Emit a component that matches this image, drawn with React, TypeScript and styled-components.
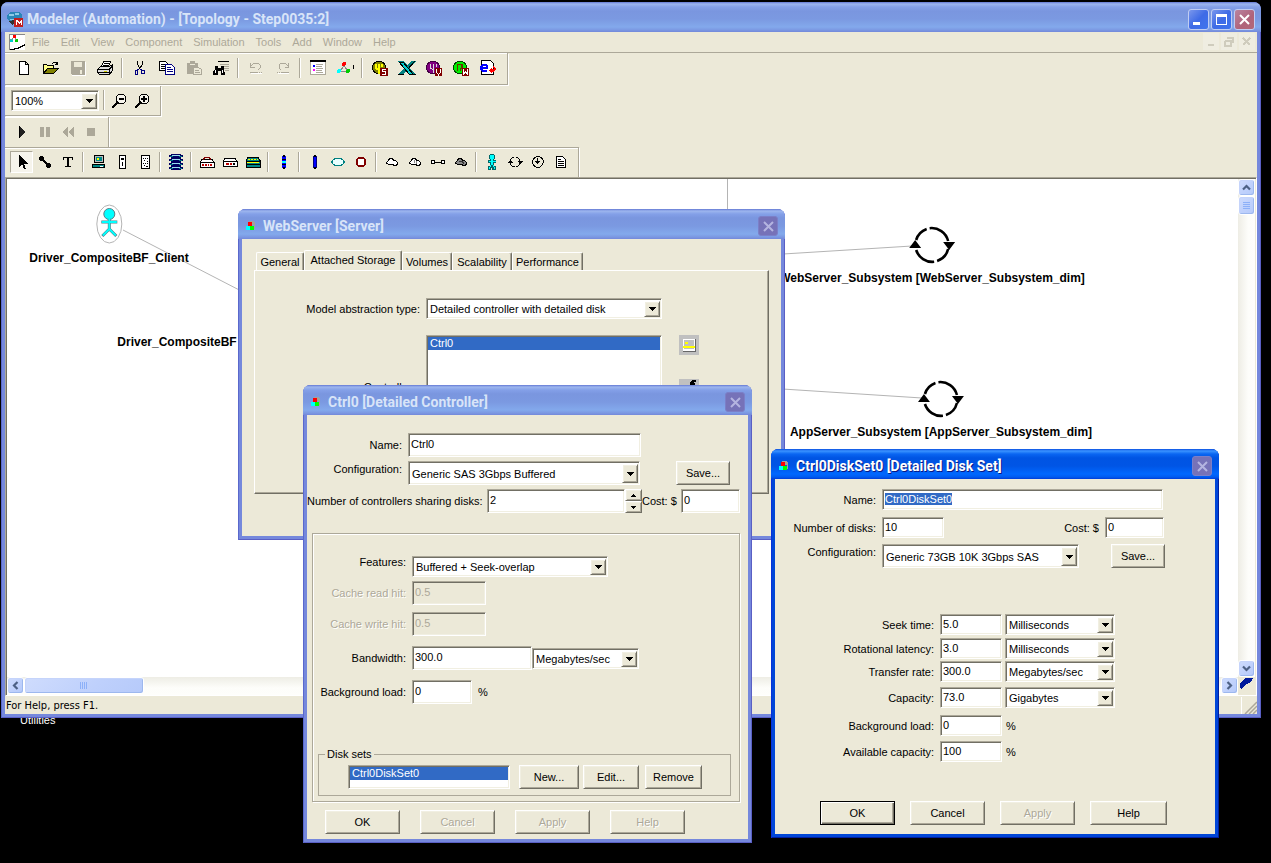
import React, { useEffect, useRef } from "react";
import styled, { createGlobalStyle, css } from "styled-components";

const face = "#ece9d8";
const shade = "#aca899";
const dark = "#716f64";
const lite = "#f1efe2";
const pick = "#316ac5";

const Global = createGlobalStyle`
  * { box-sizing: border-box; }
  html, body { margin: 0; background: #000; }
  body, button, input, select {
    font-family: "Liberation Sans", Arial, sans-serif;
    font-size: 11px;
    line-height: 14px;
    color: #000;
  }
  button, input, select { border-radius: 0; margin: 0; padding: 0; outline: none; }
  svg { display: block; flex: none; }
`;

const sunken = css`
  border: 1px solid;
  border-color: ${shade} #fff #fff ${shade};
  box-shadow: inset 1px 1px 0 ${dark}, inset -1px -1px 0 ${lite};
`;
const raised = css`
  border: 1px solid;
  border-color: #fff ${dark} ${dark} #fff;
  box-shadow: inset 1px 1px 0 ${lite}, inset -1px -1px 0 ${shade};
`;

/* ---------- windows ---------- */

const Desktop = styled.div`
  position: relative;
  min-height: 100vh;
  min-width: 1220px;
  overflow: hidden;
  background: #000;
`;
const DesktopLabel = styled.span`
  position: absolute;
  left: 20px;
  top: 713px;
  color: #fff;
`;
const Frame = styled.section<{ $active?: boolean }>`
  position: absolute;
  display: flex;
  flex-direction: column;
  padding: 0 4px 4px;
  border-radius: 8px 8px 0 0;
  background: ${(p) => (p.$active ? "#0046d8" : "#7588dc")};
  box-shadow: inset 1px 0 0 ${(p) => (p.$active ? "#0831d9" : "#5a68cc")},
    inset -1px 0 0 ${(p) => (p.$active ? "#001ea0" : "#5a5fc4")},
    inset 0 -1px 0 ${(p) => (p.$active ? "#001ea0" : "#5a5fc4")};
`;
const MainFrame = styled(Frame)`
  left: 1px;
  right: 10px;
  top: 2px;
  height: 716px;
`;
const DialogFrame = styled(Frame)<{ $x: number; $y: number; $w: number; $h: number }>`
  left: ${(p) => p.$x}px;
  top: ${(p) => p.$y}px;
  width: ${(p) => p.$w}px;
  min-height: ${(p) => p.$h}px;
`;
const TitleBar = styled.header<{ $active?: boolean; $wide?: boolean }>`
  display: flex;
  align-items: center;
  flex: none;
  height: 30px;
  margin: 0 -4px;
  padding: 4px ${(p) => (p.$wide ? "6px 0 6px" : "7px 0 7px")};
  gap: ${(p) => (p.$wide ? 4 : 6)}px;
  border-radius: 7px 7px 0 0;
  background: ${(p) =>
    p.$active
      ? "linear-gradient(#0a4fe0 0, #3a93ff 2px, #0a66f2 5px, #0054e3 9px, #0055e5 17px, #0068ff 25px, #005bf0 28px, #003dd7 30px)"
      : "linear-gradient(#6378d4 0, #9db6ee 2px, #84a0e8 5px, #7a96df 9px, #7b99e1 17px, #83a9ec 25px, #7b98e2 28px, #7388da 30px)"};
`;
const Title = styled.h1<{ $active?: boolean }>`
  flex: 1;
  margin: 0;
  font: 700 14px/18px Roboto, "Noto Sans", sans-serif;
  white-space: nowrap;
  color: ${(p) => (p.$active ? "#fff" : "#d8e4f8")};
  text-shadow: ${(p) => (p.$active ? "1px 1px 0 #0a1883" : "none")};
`;
const IconSlot = styled.span`
  display: flex;
  justify-content: center;
  width: 12px;
`;
const CaptionButton = styled.button<{ $tone: "blue" | "red" | "dim" }>`
  display: flex;
  align-items: center;
  justify-content: center;
  width: ${(p) => (p.$tone === "dim" ? 20 : 21)}px;
  height: ${(p) => (p.$tone === "dim" ? 20 : 21)}px;
  margin-left: ${(p) => (p.$tone === "dim" ? 0 : -2)}px;
  border: 1px solid ${(p) => (p.$tone === "dim" ? "#7b7fc8" : "#c0cdf3")};
  border-radius: 3px;
  background: ${(p) =>
    p.$tone === "blue"
      ? "linear-gradient(135deg, #7a97ec, #3f6be6 50%, #3f74ee)"
      : p.$tone === "red"
        ? "linear-gradient(135deg, #b9849f, #b0637a 60%, #b26878)"
        : "#7672b8"};
`;
const Body = styled.div`
  flex: 1;
  display: flex;
  flex-direction: column;
  min-height: 0;
  background: ${face};
`;

/* ---------- main window bars ---------- */

const MenuBar = styled.nav`
  display: flex;
  align-items: center;
  height: 20px;
  padding: 0 2px 1px 4px;
`;
const MenuItem = styled.button`
  margin-left: 4px;
  padding: 0 3px;
  border: 0;
  background: none;
  color: ${shade};
  & + & { margin-left: 5px; }
`;
const Spacer = styled.span`
  flex: 1;
`;
const ChildButton = styled.button`
  display: flex;
  align-items: center;
  justify-content: center;
  width: 16px;
  height: 17px;
  margin-left: 2px;
  border: 0;
  background: #efede1;
`;
const Bar = styled.div<{ $h: number; $open?: boolean; $ruled?: boolean }>`
  display: flex;
  align-items: center;
  align-self: flex-start;
  height: ${(p) => p.$h}px;
  padding: 0 6px 1px 5px;
  margin-bottom: ${(p) => (p.$open ? 0 : 1)}px;
  border-right: 1px solid ${shade};
  border-bottom: ${(p) => (p.$open ? "0" : "1px solid " + shade)};
  border-top: ${(p) => (p.$ruled ? "1px solid " + shade : "0")};
  box-shadow: 1px 1px 0 #fff, inset 0 1px 0 #fff;
`;
const Bars = styled.div`
  display: flex;
  flex-direction: column;
  border-top: 1px solid ${shade};
`;
const Rule = styled.hr`
  width: 0;
  height: 20px;
  margin: 0 3px;
  border: 0;
  border-left: 1px solid ${shade};
  border-right: 1px solid #fff;
  padding: 0;
`;
const Tool = styled.button<{ $w: number; $on?: boolean }>`
  display: flex;
  align-items: center;
  justify-content: center;
  width: ${(p) => p.$w}px;
  height: 22px;
  border: 0;
  background: none;
  ${(p) =>
    p.$on &&
    css`
      border: 1px solid;
      border-color: ${shade} #fff #fff ${shade};
      background: #f6f4ec;
    `}
`;

/* ---------- canvas ---------- */

const View = styled.div`
  flex: 1;
  display: grid;
  grid-template: 1fr 18px / 1fr 17px;
  min-height: 0;
  border: 1px solid;
  border-color: ${shade} #fff #fff ${shade};
  box-shadow: inset 1px 1px 0 ${dark};
  padding: 1px 1px 0 1px;
`;
const Canvas = styled.div`
  position: relative;
  overflow: hidden;
  background: #fff;
`;
const Links = styled.svg`
  position: absolute;
  left: 0;
  top: 0;
`;
const Node = styled.div<{ $x: number; $y: number }>`
  position: absolute;
  left: ${(p) => p.$x}px;
  top: ${(p) => p.$y}px;
  transform: translateX(-50%);
  display: flex;
  flex-direction: column;
  align-items: center;
  gap: 7px;
  font: 700 12px/14px "Liberation Sans", Arial, sans-serif;
  white-space: nowrap;
`;
const Scroll = styled.div<{ $v?: boolean }>`
  display: flex;
  flex-direction: ${(p) => (p.$v ? "column" : "row")};
  justify-content: space-between;
  gap: 1px;
  background: linear-gradient(${(p) => (p.$v ? "to right" : "to bottom")}, #eeede5, #fdfdfa 60%, #fefefb);
`;
const ScrollButton = styled.button<{ $w?: number; $h?: number }>`
  display: flex;
  align-items: center;
  justify-content: center;
  width: ${(p) => p.$w ?? 17}px;
  height: ${(p) => p.$h ?? 17}px;
  border: 1px solid #fff;
  border-radius: 3px;
  background: linear-gradient(135deg, #cfdcfd, #bed0fc 60%, #b6cafa);
  box-shadow: inset -1px -1px 0 #9db8ee, inset 1px 1px 0 #c5d4fb;
`;
const ScrollGroup = styled.div<{ $v?: boolean }>`
  display: flex;
  flex-direction: ${(p) => (p.$v ? "column" : "row")};
`;
const Corner = styled.div`
  display: flex;
  align-items: flex-start;
  justify-content: center;
  background: ${face};
`;
const Status = styled.footer`
  display: flex;
  align-items: center;
  height: 18px;
  padding: 1px 0 0 1px;
  font: 11px/14px "DejaVu Sans Condensed", sans-serif;
`;
const StatusPane = styled.span`
  width: 16px;
  height: 17px;
  border-left: 1px solid #fff;
  display: flex;
  align-items: flex-end;
  justify-content: flex-end;
`;

/* ---------- dialog parts ---------- */

const Row = styled.div<{ $top?: number; $left?: number }>`
  display: flex;
  align-items: center;
  margin-top: ${(p) => p.$top ?? 0}px;
  margin-left: ${(p) => p.$left ?? 0}px;
`;
const Label = styled.label<{ $w?: number; $off?: boolean; $raise?: boolean }>`
  flex: none;
  width: ${(p) => (p.$w ? p.$w + "px" : "auto")};
  padding-right: 6px;
  padding-bottom: ${(p) => (p.$raise ? 8 : 0)}px;
  text-align: right;
  white-space: nowrap;
  color: ${(p) => (p.$off ? shade : "#000")};
  text-shadow: ${(p) => (p.$off ? "1px 1px 0 #fff" : "none")};
`;
const Gap = styled.span<{ $w: number }>`
  flex: none;
  width: ${(p) => p.$w}px;
`;
const Field = styled.input<{ $w: number; $h?: number }>`
  ${sunken}
  flex: none;
  width: ${(p) => p.$w}px;
  height: ${(p) => p.$h ?? 21}px;
  padding: 1px 2px 3px;
  background: #fff;
  &:disabled { background: ${face}; color: ${shade}; }
  &::selection { background: ${pick}; color: #fff; }
`;
const Combo = styled.span<{ $w: number; $h?: number }>`
  ${sunken}
  flex: none;
  display: flex;
  width: ${(p) => p.$w}px;
  height: ${(p) => p.$h ?? 21}px;
  padding: 2px 1px 1px 1px;
  background: #fff;
  select {
    flex: 1;
    min-width: 0;
    border: 0;
    padding: 0 2px;
    appearance: none;
    background: transparent;
  }
`;
const Arrow = styled.span`
  ${raised}
  flex: none;
  display: flex;
  align-items: center;
  justify-content: center;
  width: 16px;
  background: ${face};
`;
const Push = styled.button<{ $w: number; $main?: boolean }>`
  ${raised}
  flex: none;
  width: ${(p) => p.$w}px;
  height: 24px;
  background: ${face};
  ${(p) =>
    p.$main &&
    css`
      border-color: #000;
      box-shadow: inset 1px 1px 0 #fff, inset -1px -1px 0 ${dark}, inset -2px -2px 0 ${shade};
    `}
  &:disabled { color: ${shade}; text-shadow: 1px 1px 0 #fff; }
`;
const Spinner = styled.span`
  display: flex;
  flex-direction: column;
  width: 17px;
`;
const SpinButton = styled.button`
  ${raised}
  display: flex;
  align-items: center;
  justify-content: center;
  height: 12px;
  background: ${face};
`;
const List = styled.ul<{ $w: number; $h: number }>`
  ${sunken}
  flex: none;
  width: ${(p) => p.$w}px;
  height: ${(p) => p.$h}px;
  margin: 0;
  padding: 1px;
  list-style: none;
  background: #fff;
  li { padding: 0 2px; line-height: 13px; background: ${pick}; color: #fff; }
`;
const Etched = styled.div`
  border: 1px solid ${shade};
  box-shadow: 1px 1px 0 #fff, inset 1px 1px 0 #fff;
`;
const ControllerPanel = styled(Etched)`
  margin: 20px 8px 0 5px;
  height: 269px;
  padding: 21px 8px 0 5px;
`;
const DiskSets = styled.fieldset`
  margin: 43px 0 0;
  padding: 0 0 5px 29px;
  height: 49px;
  border: 1px solid ${shade};
  legend { margin-left: -23px; padding: 0 2px; }
`;
const Footer = styled.div<{ $top: number; $left: number; $gap: number }>`
  display: flex;
  gap: ${(p) => p.$gap}px;
  margin: ${(p) => p.$top}px 0 0 ${(p) => p.$left}px;
`;
const Tabs = styled.div`
  display: flex;
  align-items: flex-end;
  margin: 11px 0 0 14px;
`;
const Tab = styled.button<{ $w: number; $on?: boolean }>`
  width: ${(p) => p.$w}px;
  height: ${(p) => (p.$on ? 20 : 18)}px;
  padding-bottom: ${(p) => (p.$on ? 2 : 0)}px;
  border: 1px solid;
  border-color: #fff ${dark} transparent #fff;
  border-bottom: 0;
  border-radius: 2px 2px 0 0;
  box-shadow: inset -1px 0 0 ${shade};
  background: ${face};
  white-space: nowrap;
`;
const TabPanel = styled.div`
  height: 224px;
  margin: 0 12px 0 12px;
  padding-top: 27px;
  ${raised}
  box-shadow: inset -1px -1px 0 ${shade};
`;
const SideIcons = styled.div`
  display: flex;
  flex-direction: column;
  height: 104px;
  gap: 24px;
  margin-left: 17px;
`;
const SideIcon = styled.button`
  display: flex;
  flex: none;
  align-items: center;
  justify-content: center;
  width: 20px;
  height: 20px;
  border: 0;
  background: #c0c0c0;
`;

/* ---------- drawings ---------- */

type SvgProps = { children: React.ReactNode; s?: number; h?: number; soft?: boolean };
const Svg = ({ children, s = 16, h, soft }: SvgProps) => (
  <svg width={s} height={h ?? s} viewBox={`0 0 ${s} ${h ?? s}`} fill="none" shapeRendering={soft ? "auto" : "crispEdges"} aria-hidden="true">
    {children}
  </svg>
);

const Down = () => <Svg s={7} h={4}><path d="M0 0h7v1h-1v1h-1v1h-1v1h-1v-1h-1v-1h-1v-1h-1z" fill="#000" /></Svg>;
const SpinUp = () => <Svg s={5} h={3}><path d="M2 0h1v1h1v1h1v1H0V2h1V1h1z" fill="#000" /></Svg>;
const SpinDown = () => <Svg s={5} h={3}><path d="M0 0h5v1H4v1H3v1H2V2H1V1H0z" fill="#000" /></Svg>;
const Chevron = ({ turn }: { turn: number }) => (
  <Svg s={9} h={9} soft><path d="M1 6.500L4.500 3L8 6.500" stroke="#4d6185" strokeWidth="2.200" transform={`rotate(${turn} 4.5 4.5)`} /></Svg>
);
const Cross = ({ c, w }: { c: string; w: number }) => (
  <Svg s={11} soft><path d="M1 1l9 9M10 1l-9 9" stroke={c} strokeWidth={w} /></Svg>
);
const Cubes = () => (
  <Svg s={10}>
    <path d="M3 0h4l2 2v6H8V4H3z" fill="#a3a29a" />
    <path d="M2 1h4v4H2z" fill="#f00" /><path d="M0 5h4v4H0z" fill="#0ff" /><path d="M4 5h4v4H4z" fill="#0f0" />
  </Svg>
);
const AppIcon = () => (
  <Svg>
    <path d="M3 1h9l3 3v3L9 11H3L0 8V4z" fill="#2a86b8" /><path d="M2 3h5v2H2zM8 2h4v2H8zM3 8h4v1H3z" fill="#8ccbe6" />
    <path d="M1 10l4 4 3-2v-3z" fill="#333" />
    <path d="M7 7h9v9H7z" fill="#c02020" /><path d="M9 14V9h1l2 2 2-2h1v5h-1v-3l-2 2-2-2v3z" fill="#fff" />
  </Svg>
);
const DocIcon = () => (
  <Svg>
    <path d="M0 0h16v16H0z" fill="#fff" /><path d="M.5 16V.5H16" stroke="#888" />
    <path d="M15 10h1v2h-2v1h-2v1h-2v1H6v1H1v-1h4v-1h4v-1h2v-1h2v-1h2z" fill="#000" />
    <path d="M4 1h3v3H4z" fill="#f00" /><path d="M1 5h3v3H1z" fill="#0cc" /><path d="M6 5h3v3H6z" fill="#0c0" /><path d="M4 4l-2 2M6 4l1 2" stroke="#888" />
  </Svg>
);

const icons = {
  new: <Svg><path d="M3.500 1.500h6l3 3v10h-9zM9.500 1.500v3h3" fill="#fff" stroke="#000" /></Svg>,
  open: <Svg><path d="M.5 13.500v-9h3l1 1h6v3" fill="#ff8" stroke="#000" /><path d="M.5 13.500l4-5h11l-5 5z" fill="#808000" stroke="#000" /><path d="M9 3.500l2-1h2l1 2M12 4.500h3M14.500 2v3" stroke="#000" /></Svg>,
  save: <Svg><path d="M1 1h14v14H2l-1-1z" fill={shade} /><path d="M4 2h8v5H4zM10 10h2v4h-2z" fill={face} /><path d="M15.500 2v13.500H2" stroke="#fff" /></Svg>,
  print: <Svg><path d="M4.500 6.500l2-5h7l-2 5" fill="#fff" stroke="#000" /><path d="M7 3.500h5M6 5.500h5" stroke="#000" /><path d="M.5 9.500l3-3h9l3-2v6l-3 4h-10l-2-2z" fill="#ddd" stroke="#000" /><path d="M1 9.500h11l3-3M12.500 9.500v4M1 12.500h11" stroke="#000" /><path d="M7 11h3v1H7z" fill="#cc0" /></Svg>,
  cut: <Svg><path d="M5.500 1v3l1 2 1 2M10.500 1v3l-1 2-2 2v1" stroke="#000" /><path d="M7 9l-2 1M8 9l2 1M3.500 10.500h2v4h-2zM9.500 10.500h3v3h-3z" stroke="#000080" /></Svg>,
  copy: <Svg><path d="M.5 1.500h6l2 2v7h-8z" fill="#fff" stroke="#000" /><path d="M2 4.500h4M2 6.500h5M2 8.500h5" stroke="#000" /><path d="M6.500 4.500h6l3 3v7h-9z" fill="#fff" stroke="#000080" /><path d="M8 7.500h4M8 9.500h6M8 11.500h6" stroke="#000080" /></Svg>,
  paste: <Svg><path d="M1 3h3V1h5v2h3v11H1z" fill={shade} /><path d="M4 4h5" stroke={face} /><path d="M7.500 7.500h5l3 2v5h-8z" fill={face} stroke={shade} /><path d="M9 10.500h4M9 12.500h5" stroke={shade} /></Svg>,
  find: <Svg><path d="M5 1.500h11" stroke="#000" /><path d="M7 4.500h9M9 6.500h7M11 8.500h5M12 10.500h4" stroke={shade} /><path d="M2 6h3v2h3V6h3v3l1 6H8v-4H5v4H0v-4l2-2z" fill="#000" /><path d="M2 10h1v3H2zM9 10h1v3H9z" fill="#fff" /></Svg>,
  undo: <Svg><path d="M2.500 3v4h4M3 6l3-3h4l2 2v3l-2 2" stroke={shade} /><path d="M2 12.500h8M11 12.500h1M13 12.500h1" stroke={shade} /><path d="M3 13.500h11" stroke="#fff" /></Svg>,
  redo: <Svg><path d="M13.500 3v4h-4M13 6l-3-3H6L4 5v3l2 2" stroke={shade} /><path d="M6 12.500h8M4 12.500h1M2 12.500h1" stroke={shade} /><path d="M3 13.500h11" stroke="#fff" /></Svg>,
  props: <Svg><path d="M.5 1.500h15v13H.5z" fill="#fff" stroke={shade} /><path d="M0 1h16" stroke="#000" strokeWidth="2" /><path d="M3 5h2v2H3z" fill="#00f" /><path d="M3 9h2v2H3z" fill="#f0f" /><path d="M6 4.500h7M6 6.500h6M6 8.500h7M6 10.500h6M6 12.500h7" stroke={shade} /></Svg>,
  topo: <Svg s={18} h={16}><path d="M8 6l-4 5M8 6l4 5M4 11.500h8" stroke="#888" /><circle cx="8" cy="4" r="2" fill="#f00" /><circle cx="3" cy="11" r="2" fill="#0ff" /><circle cx="12" cy="11" r="2" fill="#0c0" /><path d="M17.500 5v4" stroke="#000" /></Svg>,
  s: <Svg><circle cx="7" cy="7.500" r="6.500" fill="#808000" stroke="#000" /><path d="M4 4v4l3 2v4M7 4v5M10 4v3" stroke="#ff0" strokeWidth="2" /><path d="M8 8h8v8H8z" fill="#800000" /><path d="M14 9.500h-3.500v2h3v2.500H10" stroke="#fff" /></Svg>,
  x: <Svg s={18} h={16}><path d="M0 1h6l3 4 4-4h5l-6 7 5 6v1h-6l-3-4-4 4H0l6-7z" fill="#008080" /><path d="M1 2l4 0 10 12h-4z" fill="#0cc" stroke="#000" /><path d="M17 1l-7 8M0 14.500h6M11 14.500h7" stroke="#000" /></Svg>,
  v: <Svg><circle cx="7" cy="7.500" r="6.500" fill="#800080" stroke="#400040" /><path d="M4.500 4v4l3 2v3M7.500 4v5M10.500 4v3" stroke="#ddd" /><path d="M9 8h7v8H9z" fill="#800000" /><path d="M10.500 9v3l2 3 2-3V9" stroke="#fff" /></Svg>,
  w: <Svg><circle cx="7" cy="7.500" r="6.500" fill="#0e0" stroke="#040" /><path d="M4.500 4v7M5 4.500h3v4H7M9.500 4v4M7.500 8v3" stroke="#630" /><path d="M9 8h7v8H9z" fill="#800000" /><path d="M10.500 9v5l2-2 2 2V9" stroke="#fff" /></Svg>,
  e: <Svg><path d="M1.500.5h9l3 3v11h-12z" fill="#fff" stroke="#000" /><path d="M2 4h4l2 2v3H3v1h4v2H2l-2-2V6zM3 6v1h3V6z" fill="#00f" fillRule="evenodd" /><path d="M9 10l3-3v2h2l-1-3 3 3-2 3h-2v2z" fill="#f00" /></Svg>,
  zoomOut: <Svg s={17}><circle cx="10" cy="7" r="5" fill="#f6f4ec" stroke="#000" /><path d="M8 7h5" stroke="#000" strokeWidth="2" /><path d="M1 16l6-6" stroke="#000" strokeWidth="2" /></Svg>,
  zoomIn: <Svg s={17}><circle cx="10" cy="7" r="5" fill="#f6f4ec" stroke="#000" /><path d="M7 7h6M10 4v6" stroke="#000" strokeWidth="2" /><path d="M1 16l6-6" stroke="#000" strokeWidth="2" /></Svg>,
  play: <Svg><path d="M5 2l7 6-7 6z" fill="#222" /><path d="M5.500 2v12" stroke="#000" /></Svg>,
  pause: <Svg><path d="M3 3h4v10H3zM9 3h4v10H9z" fill={shade} /></Svg>,
  rewind: <Svg><path d="M8 2v12L2 8zM14 2v12L8 8z" fill={shade} /></Svg>,
  stop: <Svg><path d="M4 4h8v8H4z" fill={shade} /></Svg>,
  pointer: <Svg><path d="M5 1v12l3-3 2 5h2l-2-5h4z" fill="#000" /></Svg>,
  link: <Svg><path d="M4 4l8 8" stroke="#000" strokeWidth="2" /><path d="M2 3h1V2h3v1h1v3H6v1H3V6H2zM9 10h1V9h3v1h1v3h-1v1h-3v-1H9z" fill="#000" /></Svg>,
  text: <Svg><path d="M3 3h10v3h-1V4H9v8h2v1H5v-1h2V4H4v2H3z" fill="#000" /></Svg>,
  pc: <Svg><path d="M3.500 1.500h9v7h-9z" fill="#bbb" stroke="#000" /><path d="M5 3h6v4H5z" fill="#088" /><path d="M6 4h2v2H6z" fill="#ff0" /><path d="M1.500 10.500h12v3h-12z" fill="#088" stroke="#000" /><path d="M9 12h3" stroke="#fff" /></Svg>,
  tower: <Svg><path d="M5.500 1.500h6v13h-6z" fill="#fff" stroke="#000" /><path d="M7 4h3v2H7zM8 8h1v4H8z" fill="#000" /></Svg>,
  server: <Svg><path d="M4.500 1.500h8v13h-8z" fill="#fff" stroke="#000" /><path d="M6 4h1v1H6zM8 4h1v1H8zM10 4h1v1h-1zM7 6h1v1H7zM10 7h1v1h-1zM6 9h1v1H6zM8 9h1v1H8zM10 9h1v1h-1zM7 11h1v1H7zM9 12h2v1H9z" fill="#000" /></Svg>,
  disks: (
    <Svg>
      {[0, 4, 8, 12].map((y) => (
        <g key={y}>
          <path d={`M3 ${y}h10v1h2v2h-2v1H3V${y + 3}H1V${y + 1}h2z`} fill="#000060" />
          <path d={`M4 ${y + 1}h8v1H4z`} fill="#9de" />
          <path d={`M2 ${y + 2}h3v1H2zM11 ${y + 2}h3v1h-3z`} fill="#008080" />
        </g>
      ))}
    </Svg>
  ),
  router: <Svg><path d="M3 5.500h10l2 3v5H1v-5z" fill="#fff" stroke="#000" /><path d="M4 5.500l2-2h4l2 2" stroke="#800000" /><path d="M1 8.500h14" stroke="#000" /><path d="M3 10h2v2H3zM6 10h2v2H6zM9 10h1v2H9zM11 10h2v2h-2z" fill="#b00" /></Svg>,
  hub: <Svg><path d="M3 4.500h10l2 3v5H1v-5z" fill="#fff" stroke="#000" /><path d="M1 7.500h14" stroke="#000" /><path d="M4 9h3v2H4zM8 9h2v2H8z" fill="#b00" /><path d="M11 9h2v2h-2z" fill="#000" /></Svg>,
  switch: <Svg><path d="M3 3.500h10l2 3v7H1v-7z" fill="#088" stroke="#000" /><path d="M3 5.500h10" stroke="#ff0" strokeDasharray="2 1" /><path d="M1 7h14M1 10.500h14" stroke="#000" /><path d="M2 8.500h12" stroke="#ff0" /></Svg>,
  bus: <Svg><path d="M6 2h4v12H6z" fill="#00f" /><path d="M7 1h2v2H7zM7 13h2v2H7zM6 5h4v1H6zM6 10h4v1H6z" fill="#000" /><path d="M6 7h4v2H6z" fill="#0ff" /></Svg>,
  bar: <Svg><path d="M6.500 2.500h3v11h-3z" fill="#00f" stroke="#000080" /><path d="M7 1h2v2H7zM7 13h2v2H7z" fill="#000" /></Svg>,
  ring: <Svg><ellipse cx="8" cy="8" rx="6" ry="3.500" stroke="#008080" strokeWidth="1.500" fill="#e8ffff" /></Svg>,
  ringRed: <Svg><circle cx="8" cy="8" r="4.500" stroke="#800000" strokeWidth="2" fill="#fff" /></Svg>,
  cloud: <Svg><path d="M2.500 8.500l2-2 1-2h3l1 2h2l2 2v2l-2 1-4-1h-2l-3-1z" fill="#fff" stroke="#000" /></Svg>,
  cloudLan: <Svg><path d="M2.500 8.500l2-2 1-2h3l1 2h2l2 2v2l-2 1-4-1h-2l-3-1z" fill="#fff" stroke="#000" /><path d="M7.500 6v3M9.500 7v3" stroke="#888" /></Svg>,
  pair: <Svg><path d="M1.500 6.500h3v3h-3zM11.500 6.500h3v3h-3z" fill="#fff" stroke="#000" /><path d="M5 8.500h6" stroke="#000" /></Svg>,
  cloudDark: <Svg><path d="M2.500 8.500l2-2 1-2h3l1 2h2l2 2v2l-2 1-4-1h-2l-3-1z" fill="#888" stroke="#000" /><path d="M6 8l3-1 2 3" stroke="#333" /></Svg>,
  person: (
    <Svg>
      <path d="M6 0h4v1h1v4h-1v1h2v3h-2v3h2v4H8v-2H7v2H4v-4h2V9H4V6h2V5H5V1h1z" fill="#066" />
      <path d="M6 1h4v4H6zM7 5h2v6H7zM5 7h7v1H5zM6 11h1v2H5v2h1v-1zM9 11h1v2h1v2h-1v-2H9z" fill="#0ff" />
    </Svg>
  ),
  cycle: <Svg><circle cx="8" cy="8" r="5" stroke="#000" strokeDasharray="6 2" /><path d="M0 9h6L3 6zM10 7h6l-3 3z" fill="#000" /></Svg>,
  into: <Svg><circle cx="8" cy="8" r="5.300" stroke="#000" /><path d="M7 4h1v3h2v1H9v1H8v1H7V9H6V8H5V7h2z" fill="#000" /></Svg>,
  page: <Svg><path d="M3.500 2.500h6l3 3v8h-9z" fill="#fff" stroke="#000" /><path d="M5 5.500h3M5 7.500h6M5 9.500h6M5 11.500h6" stroke="#000" /></Svg>,
};
type IconName = keyof typeof icons;

const Person = () => (
  <svg width="28" height="40" viewBox="0 0 28 40" fill="none" aria-hidden="true">
    <ellipse cx="14" cy="20" rx="12.500" ry="19" stroke="#b4b4b4" />
    <g stroke="#5b7d86" strokeWidth="3"><path d="M6 18h16M14 14v12M14 25l-7 7M14 25l7 7" /></g>
    <circle cx="14" cy="10" r="5.500" fill="#0ff" stroke="#5b7d86" />
    <path d="M6.500 18h15M14 15v10M14 25l-6.500 6.500M14 25l6.500 6.500" stroke="#0ff" strokeWidth="1.800" />
  </svg>
);
const Cycle = () => (
  <svg width="46" height="38" viewBox="0 0 46 38" fill="none" aria-hidden="true">
    <path d="M7 14A17 17 0 0 1 17.500 3M20.500 2.200A17 17 0 0 1 39 15M39 23A17 17 0 0 1 28 35M25 35.800A17 17 0 0 1 7 24" stroke="#000" strokeWidth="2.600" />
    <path d="M0 22L6 14L12 22zM34 16h12l-6 8z" fill="#000" />
  </svg>
);

/* ---------- composed controls ---------- */

const Tools = ({ w, names, on }: { w: number; names: (IconName | "|")[]; on?: IconName }) => (
  <>
    {names.map((n, i) => (n === "|" ? <Rule key={i} /> : <Tool key={i} $w={w} $on={n === on} aria-label={n}>{icons[n]}</Tool>))}
  </>
);
const Drop = ({ id, w, h, value, label }: { id: string; w: number; h?: number; value: string; label?: string }) => (
  <Combo $w={w} $h={h}>
    <select id={id} aria-label={label} defaultValue={value}><option>{value}</option></select>
    <Arrow><Down /></Arrow>
  </Combo>
);

type DialogProps = { title: string; x: number; y: number; w: number; h: number; active?: boolean; children: React.ReactNode };
const Dialog = ({ title, x, y, w, h, active, children }: DialogProps) => (
  <DialogFrame $x={x} $y={y} $w={w} $h={h} $active={active} role="dialog" aria-label={title}>
    <TitleBar $active={active}>
      <IconSlot><Cubes /></IconSlot>
      <Title $active={active}>{title}</Title>
      <CaptionButton $tone="dim" aria-label="Close"><Cross c="#b4b4e0" w={2} /></CaptionButton>
    </TitleBar>
    <Body>{children}</Body>
  </DialogFrame>
);

const ServerDialog = () => (
  <Dialog title="WebServer [Server]" x={238} y={209} w={547} h={331}>
    <Tabs role="tablist">
      <Tab role="tab" $w={48}>General</Tab>
      <Tab role="tab" $w={98} $on aria-selected="true">Attached Storage</Tab>
      <Tab role="tab" $w={50}>Volumes</Tab>
      <Tab role="tab" $w={60}>Scalability</Tab>
      <Tab role="tab" $w={71}>Performance</Tab>
    </Tabs>
    <TabPanel role="tabpanel">
      <Row>
        <Label $w={171} htmlFor="abstraction">Model abstraction type:</Label>
        <Drop id="abstraction" w={236} value="Detailed controller with detailed disk" />
      </Row>
      <Row $top={16}>
        <Label $w={171} as="span" id="controllers">Controllers:</Label>
        <List $w={236} $h={104} role="listbox" aria-labelledby="controllers"><li role="option" aria-selected="true">Ctrl0</li></List>
        <SideIcons>
          <SideIcon aria-label="New controller">
            <Svg s={14}><path d="M1 1h12v12H1z" fill="#fff" /><path d="M13.500 1v12.500H1" stroke="#666" /><path d="M2 2h10v9H2z" fill="#c0c0c0" /><path d="M1 8h12v2H1zM3 4h3v2H3z" fill="#ff0" /></Svg>
          </SideIcon>
          <SideIcon aria-label="Edit controller">
            <Svg s={18}><path d="M12 1h4M10 4l3-3 1 5M12 4L3 14" stroke="#000" strokeWidth="2" /></Svg>
          </SideIcon>
          <SideIcon aria-label="Delete controller"><Cross c="#000" w={2} /></SideIcon>
        </SideIcons>
      </Row>
    </TabPanel>
  </Dialog>
);

const ControllerDialog = () => (
  <Dialog title="Ctrl0 [Detailed Controller]" x={303} y={385} w={449} h={458}>
    <Row $top={18}>
      <Label $w={101} htmlFor="cName">Name:</Label>
      <Field id="cName" $w={233} $h={24} defaultValue="Ctrl0" />
    </Row>
    <Row $top={4}>
      <Label $w={101} $raise htmlFor="cConf">Configuration:</Label>
      <Drop id="cConf" w={232} h={24} value="Generic SAS 3Gbps Buffered" />
      <Gap $w={36} />
      <Push $w={54}>Save...</Push>
    </Row>
    <Row $top={4}>
      <Label $w={180} htmlFor="sharing">Number of controllers sharing disks:</Label>
      <Field id="sharing" $w={138} $h={24} defaultValue="2" />
      <Spinner>
        <SpinButton aria-label="Increase"><SpinUp /></SpinButton>
        <SpinButton aria-label="Decrease"><SpinDown /></SpinButton>
      </Spinner>
      <Label $w={39} htmlFor="cCost">Cost: $</Label>
      <Field id="cCost" $w={59} $h={24} defaultValue="0" />
    </Row>
    <ControllerPanel>
      <Row>
        <Label $w={94} $raise htmlFor="features">Features:</Label>
        <Drop id="features" w={196} value="Buffered + Seek-overlap" />
      </Row>
      <Row $top={4}>
        <Label $w={94} $off htmlFor="readHit">Cache read hit:</Label>
        <Field id="readHit" $w={74} $h={24} disabled defaultValue="0.5" />
      </Row>
      <Row $top={7}>
        <Label $w={94} $off htmlFor="writeHit">Cache write hit:</Label>
        <Field id="writeHit" $w={74} $h={24} disabled defaultValue="0.5" />
      </Row>
      <Row $top={10}>
        <Label $w={94} htmlFor="bandwidth">Bandwidth:</Label>
        <Field id="bandwidth" $w={120} $h={24} defaultValue="300.0" />
        <Drop id="bandwidthUnit" label="Bandwidth unit" w={107} value="Megabytes/sec" />
      </Row>
      <Row $top={10}>
        <Label $w={94} htmlFor="cLoad">Background load:</Label>
        <Field id="cLoad" $w={60} $h={24} defaultValue="0" />
        <Gap $w={6} />%
      </Row>
      <DiskSets>
        <legend>Disk sets</legend>
        <Row $top={4}>
          <List $w={162} $h={24} role="listbox" aria-label="Disk sets"><li role="option" aria-selected="true">Ctrl0DiskSet0</li></List>
          <Gap $w={9} /><Push $w={60}>New...</Push>
          <Gap $w={4} /><Push $w={56}>Edit...</Push>
          <Gap $w={6} /><Push $w={57}>Remove</Push>
        </Row>
      </DiskSets>
    </ControllerPanel>
    <Footer $top={8} $left={18} $gap={20}>
      <Push $w={75}>OK</Push>
      <Push $w={75} disabled>Cancel</Push>
      <Push $w={75} disabled>Apply</Push>
      <Push $w={75} disabled>Help</Push>
    </Footer>
  </Dialog>
);

const specs = [
  { id: "seek", label: "Seek time:", value: "5.0", unit: "Milliseconds", top: 46 },
  { id: "latency", label: "Rotational latency:", value: "3.0", unit: "Milliseconds", top: 3 },
  { id: "rate", label: "Transfer rate:", value: "300.0", unit: "Megabytes/sec", top: 2 },
  { id: "capacity", label: "Capacity:", value: "73.0", unit: "Gigabytes", top: 5 },
];

const DiskDialog = () => {
  const name = useRef<HTMLInputElement>(null);
  useEffect(() => {
    name.current?.focus();
    name.current?.select();
  }, []);
  return (
    <Dialog title="Ctrl0DiskSet0 [Detailed Disk Set]" x={771} y={449} w={448} h={389} active>
      <Row $top={10}>
        <Label $w={107} htmlFor="dName">Name:</Label>
        <Field ref={name} id="dName" $w={281} defaultValue="Ctrl0DiskSet0" />
      </Row>
      <Row $top={7}>
        <Label $w={107} htmlFor="disks">Number of disks:</Label>
        <Field id="disks" $w={62} defaultValue="10" />
        <Label $w={161} htmlFor="dCost">Cost: $</Label>
        <Field id="dCost" $w={59} defaultValue="0" />
      </Row>
      <Row $top={6}>
        <Label $w={107} $raise htmlFor="dConf">Configuration:</Label>
        <Drop id="dConf" w={197} h={24} value="Generic 73GB 10K 3Gbps SAS" />
        <Gap $w={32} />
        <Push $w={54}>Save...</Push>
      </Row>
      {specs.map((s) => (
        <Row key={s.id} $top={s.top}>
          <Label $w={165} htmlFor={s.id}>{s.label}</Label>
          <Field id={s.id} $w={62} defaultValue={s.value} />
          <Gap $w={3} />
          <Drop id={s.id + "Unit"} label={s.label + " unit"} w={110} value={s.unit} />
        </Row>
      ))}
      <Row $top={7}>
        <Label $w={165} htmlFor="dLoad">Background load:</Label>
        <Field id="dLoad" $w={62} defaultValue="0" /><Gap $w={4} />%
      </Row>
      <Row $top={5}>
        <Label $w={165} htmlFor="avail">Available capacity:</Label>
        <Field id="avail" $w={62} defaultValue="100" /><Gap $w={4} />%
      </Row>
      <Footer $top={39} $left={45} $gap={15}>
        <Push $w={75} $main>OK</Push>
        <Push $w={75}>Cancel</Push>
        <Push $w={75} disabled>Apply</Push>
        <Push $w={77}>Help</Push>
      </Footer>
    </Dialog>
  );
};

const menus = ["File", "Edit", "View", "Component", "Simulation", "Tools", "Add", "Window", "Help"];

const MainWindow = () => (
  <MainFrame>
    <TitleBar $wide>
      <AppIcon />
      <Title>Modeler (Automation) - [Topology - Step0035:2]</Title>
      <CaptionButton $tone="blue" aria-label="Minimize"><Svg s={11}><path d="M0 8h7v3H0z" fill="#fff" /></Svg></CaptionButton>
      <CaptionButton $tone="blue" aria-label="Maximize"><Svg s={11}><path d="M.5 2v8.500h10V2" stroke="#fff" /><path d="M0 0h11v3H0z" fill="#fff" /></Svg></CaptionButton>
      <CaptionButton $tone="red" aria-label="Close"><Cross c="#fff" w={2} /></CaptionButton>
    </TitleBar>
    <Body>
      <MenuBar>
        <DocIcon />
        {menus.map((m) => <MenuItem key={m}>{m}</MenuItem>)}
        <Spacer />
        <ChildButton aria-label="Minimize child"><Svg s={10}><path d="M2 7h6v2H2z" fill="#cfccbd" /></Svg></ChildButton>
        <ChildButton aria-label="Restore child"><Svg s={10}><path d="M3 1h6v5M1 4h6v5H1V4" stroke="#cfccbd" strokeWidth="1.500" /></Svg></ChildButton>
        <ChildButton aria-label="Close child"><Svg s={10}><path d="M1 1l7 7M8 1L1 8" stroke="#cfccbd" strokeWidth="2" /></Svg></ChildButton>
      </MenuBar>
      <Bars>
        <Bar $h={32}><Tools w={27} names={["new", "open", "save", "print", "|", "cut", "copy", "paste", "find", "|", "undo", "redo", "|", "props", "topo", "|", "s", "x", "v", "w", "e"]} /></Bar>
        <Bar $h={30}>
          <Gap $w={1} /><Drop id="zoom" label="Zoom" w={88} value="100%" />
          <Gap $w={1} /><Rule /><Tools w={23} names={["zoomOut", "zoomIn"]} />
        </Bar>
        <Bar $h={30} $open><Tools w={23} names={["play", "pause", "rewind", "stop"]} /></Bar>
        <Bar $h={30} $open $ruled>
          <Tools w={23} on="pointer" names={["pointer", "link", "text", "|", "pc", "tower", "server", "|", "disks", "|", "router", "hub", "switch", "|", "bus", "|", "bar", "ring", "ringRed", "|", "cloud", "cloudLan", "pair", "cloudDark", "|", "person", "cycle", "into", "page"]} />
        </Bar>
      </Bars>
      <View>
        <Canvas>
          <Links width="1231" height="498" viewBox="0 0 1231 498" fill="none" stroke="#b4b4b4" aria-hidden="true">
            <path d="M116 51L240 115M720.500 0v60M760 76L905 67M760 209L915 219" />
          </Links>
          <Node $x={102} $y={25}><Person />Driver_CompositeBF_Client</Node>
          <Node $x={170} $y={156}>Driver_CompositeBF</Node>
          <Node $x={925} $y={47}><Cycle />WebServer_Subsystem [WebServer_Subsystem_dim]</Node>
          <Node $x={934} $y={201}><Cycle />AppServer_Subsystem [AppServer_Subsystem_dim]</Node>
        </Canvas>
        <Scroll $v>
          <ScrollGroup $v>
            <ScrollButton aria-label="Scroll up"><Chevron turn={0} /></ScrollButton>
            <ScrollButton $h={19} aria-label="Vertical thumb"><Svg s={8}><path d="M0 .5h7M0 2.500h7M0 4.500h7M0 6.500h7" stroke="#8cb0f8" /></Svg></ScrollButton>
          </ScrollGroup>
          <ScrollButton aria-label="Scroll down"><Chevron turn={180} /></ScrollButton>
        </Scroll>
        <Scroll>
          <ScrollGroup>
            <ScrollButton aria-label="Scroll left"><Chevron turn={270} /></ScrollButton>
            <ScrollButton $w={120} aria-label="Horizontal thumb"><Svg s={8}><path d="M.5 0v7M2.500 0v7M4.500 0v7M6.500 0v7" stroke="#8cb0f8" /></Svg></ScrollButton>
          </ScrollGroup>
          <ScrollButton aria-label="Scroll right"><Chevron turn={90} /></ScrollButton>
        </Scroll>
        <Corner><Svg s={13} h={12}><path d="M0 11V6l3-3 3-2h7l-2 4-4 2-3 2-2 3z" fill="#001a9c" /></Svg></Corner>
      </View>
      <Status>
        For Help, press F1.
        <Spacer />
        <StatusPane><Svg s={13} soft><path d="M1 13L13 1M5 13l8-8M9 13l4-4" stroke={shade} strokeWidth="1.500" /></Svg></StatusPane>
      </Status>
    </Body>
  </MainFrame>
);

export default function App() {
  return (
    <Desktop>
      <Global />
      <DesktopLabel>Utilities</DesktopLabel>
      <MainWindow />
      <ServerDialog />
      <ControllerDialog />
      <DiskDialog />
    </Desktop>
  );
}
